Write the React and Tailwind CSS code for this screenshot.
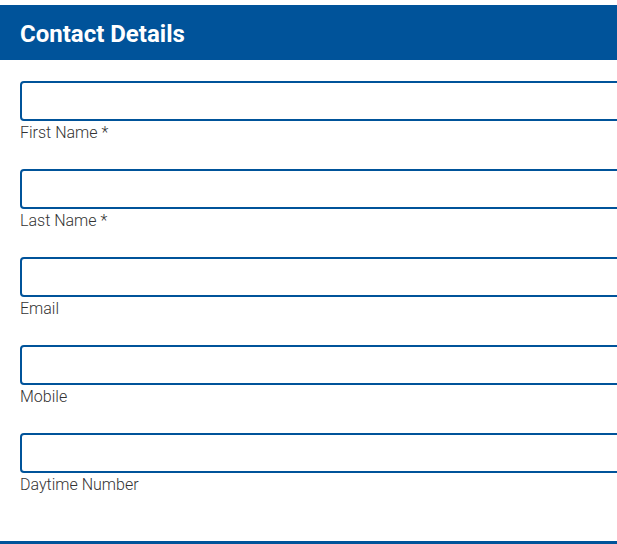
import React from 'react';

const fields = ['First Name *', 'Last Name *', 'Email', 'Mobile', 'Daytime Number'];

const App = () => {
  return (
    <div className="h-[544px] w-full overflow-hidden bg-white font-['Roboto',sans-serif]">
      <div className="h-[541px] pt-[5px]">
        <div className="h-[55px] bg-[#00539a] flex items-center px-5 pt-[2px]">
          <h2 className="text-[24px] font-bold text-white leading-none">Contact Details</h2>
        </div>
        <div className="pt-[21px] pl-5 flex flex-col gap-[26px]">
          {fields.map((label) => (
            <div key={label} className="flex flex-col">
              <input
                type="text"
                className="w-[640px] h-10 border-2 border-[#00539a] rounded-[4px] outline-none px-2"
              />
              <label className="text-[16px] font-light text-[#333] leading-5 mt-[2px]">{label}</label>
            </div>
          ))}
        </div>
      </div>
      <div className="h-[3px] bg-[#00539a]"></div>
    </div>
  );
};

export default App;
